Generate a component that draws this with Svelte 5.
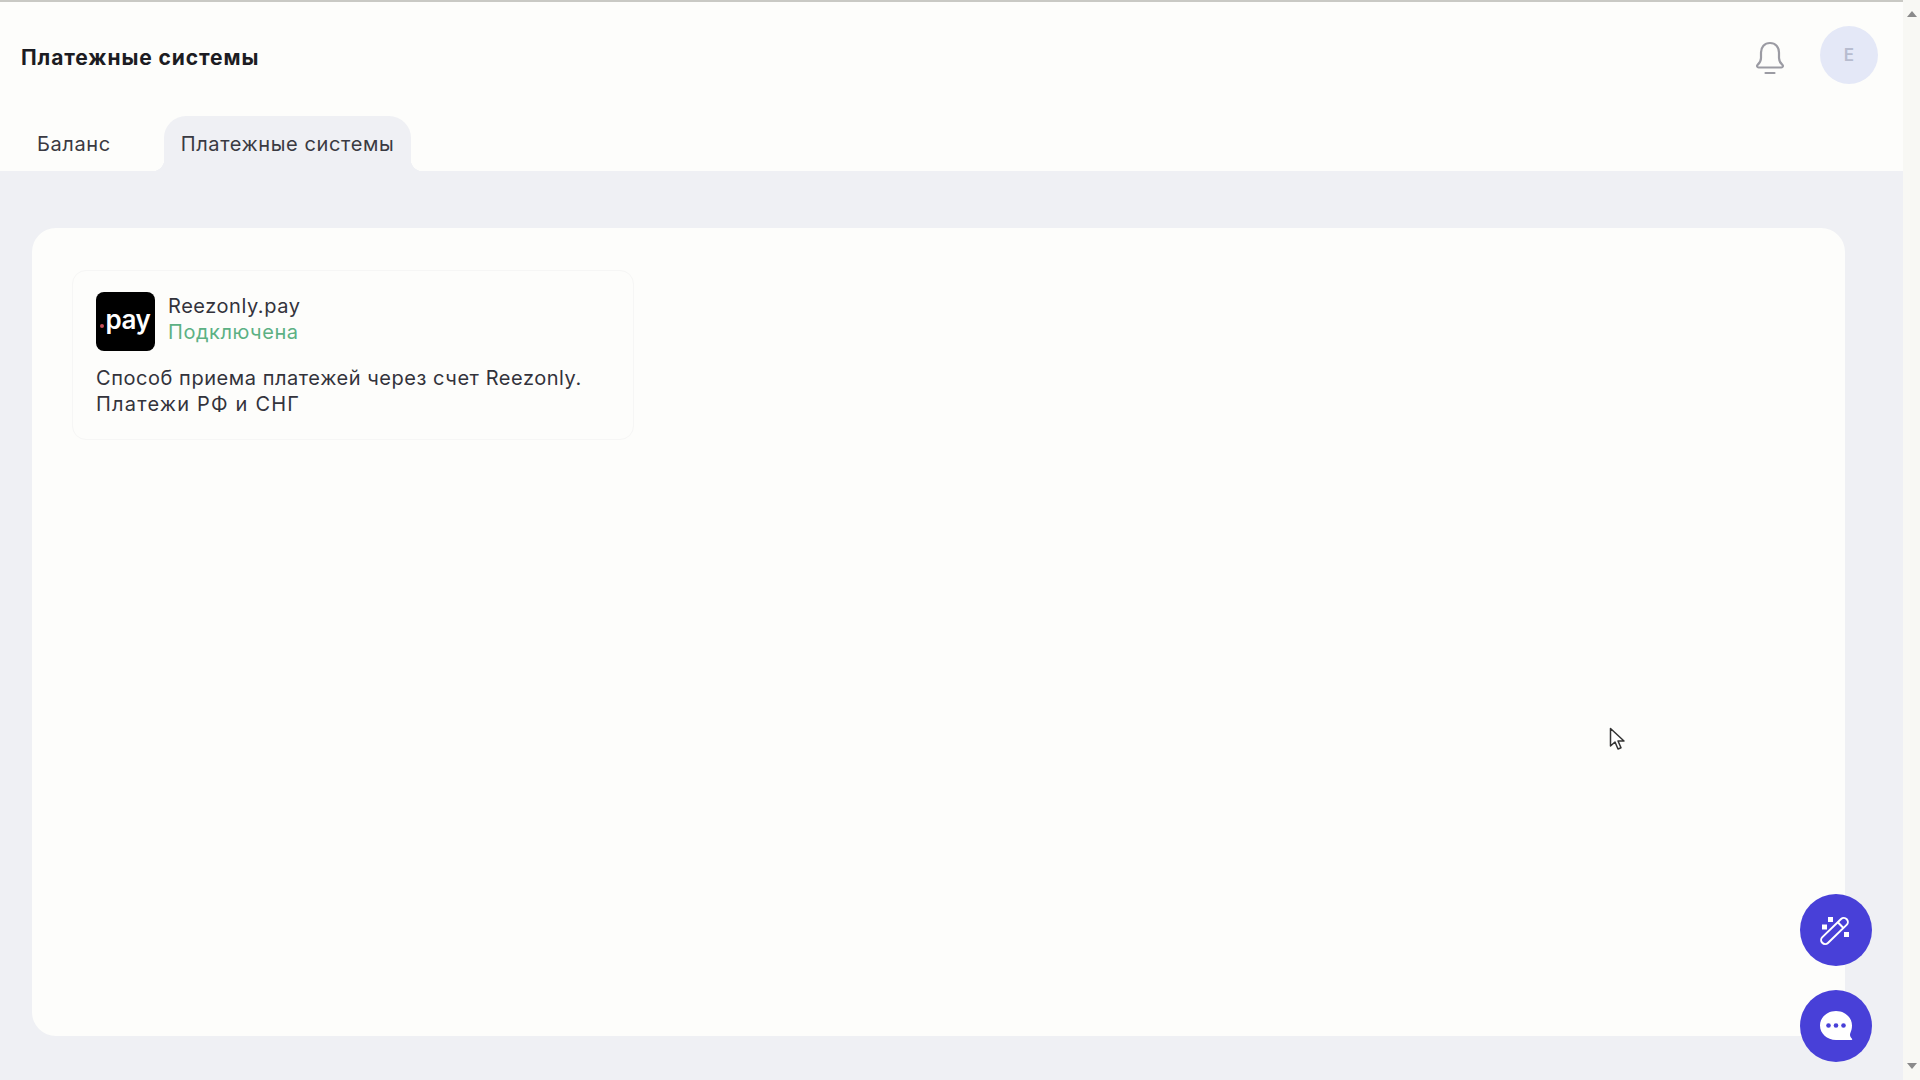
<script>
    let tabs = ["Баланс", "Платежные системы"];
    let active = $state(1);
</script>

<div class="page">
    <div class="content">
        <header class="topbar">
            <div class="title-row">
                <h1>Платежные системы</h1>
                <div class="user">
                    <svg class="bell" viewBox="0 0 30 34" width="30" height="34" fill="none" stroke="#9b9ba3" stroke-width="2.2">
                        <path d="M15 2c-5.600 0-9 4.200-9 9.500v5.500c0 3-1.300 5-3.400 6.800-1 .9-.5 2.700 1 2.700h22.800c1.500 0 2-1.800 1-2.700-2.100-1.800-3.400-3.800-3.400-6.800v-5.500c0-5.300-3.400-9.500-9-9.500z" stroke-linejoin="round" />
                        <path d="M10.500 32h9" stroke-linecap="round" />
                    </svg>
                    <div class="avatar">E</div>
                </div>
            </div>
            <nav class="tabs">
                {#each tabs as tab, i}
                    <button class="tab" class:active={active === i} onclick={() => (active = i)}>{tab}</button>
                {/each}
            </nav>
        </header>

        <main class="body">
            <section class="panel">
                <article class="system">
                    <div class="system-head">
                        <div class="logo"><i class="logo-dot"></i><span>pay</span></div>
                        <div class="system-name">
                            <div>Reezonly.pay</div>
                            <div class="status">Подключена</div>
                        </div>
                    </div>
                    <p>Способ приема платежей через счет Reezonly.<br /><span class="regions">Платежи РФ и СНГ</span></p>
                </article>
            </section>
        </main>
    </div>

    <div class="scrollbar">
        <svg viewBox="0 0 10 6" width="10" height="6"><path d="M0 6 5 0l5 6z" fill="#8a8a8a" /></svg>
        <svg viewBox="0 0 10 6" width="10" height="6"><path d="M0 0l5 6 5-6z" fill="#8a8a8a" /></svg>
    </div>

    <button class="fab wand" aria-label="Подсказки">
        <svg viewBox="0 0 32 32" width="32" height="32" fill="none" stroke="#fff" stroke-width="2">
            <g transform="translate(14.500 17) rotate(-44)">
                <rect x="-17" y="-4" width="34" height="8" rx="4" />
                <path d="M8.500-4v8" />
            </g>
            <g fill="#fff" stroke="none">
                <rect x="8" y="3" width="5" height="5" />
                <rect x="2" y="10.500" width="5" height="5" />
                <rect x="24" y="18" width="5" height="5" />
            </g>
        </svg>
    </button>
    <button class="fab chat" aria-label="Чат">
        <svg viewBox="0 0 34 32" width="34" height="32">
            <path d="M17 1C8 1 1 7.500 1 15.500S8 30 17 30h15.500c.7 0 1-.8.500-1.300-1.800-1.800-2.300-3.300-1.800-5.200C32.300 21 33 18.500 33 15.500 33 7.500 26 1 17 1z" fill="#fff" />
            <circle cx="9.500" cy="15.500" r="2.300" fill="#4840d8" />
            <circle cx="17" cy="15.500" r="2.300" fill="#4840d8" />
            <circle cx="24.500" cy="15.500" r="2.300" fill="#4840d8" />
        </svg>
    </button>

    <svg class="cursor" viewBox="0 0 16 24" width="16" height="24">
        <path d="M1.500 1.500v17.500l4.500-4 3 7 3-1.300-3-6.700h6z" fill="#fff" stroke="#333" stroke-width="1.500" stroke-linejoin="round" />
    </svg>
</div>

<style>
    :global(body) {
        background: #fdfdfb;
    }

    .page {
        display: flex;
        height: 1080px;
        overflow: hidden;
        position: relative;
        font-family: "Inter", "Noto Sans", sans-serif;
        color: #33333b;
    }

    .content {
        flex: 1;
        display: flex;
        flex-direction: column;
        min-width: 0;
    }

    .topbar {
        background: #fdfdfb;
        border-top: 2px solid #c9c9c4;
        height: 171px;
        box-sizing: border-box;
    }

    .title-row {
        display: flex;
        align-items: center;
        justify-content: space-between;
        height: 114px;
        padding: 0 8px 8px 21px;
        box-sizing: border-box;
    }

    h1 {
        margin: 5px 0 0;
        font-size: 21px;
        font-weight: 700;
        color: #1c1c22;
        letter-spacing: 0.9px;
    }

    .user {
        display: flex;
        align-items: center;
        gap: 35px;
        padding-right: 17px;
    }

    .bell {
        margin-top: 5px;
    }

    .avatar {
        width: 58px;
        height: 58px;
        border-radius: 50%;
        background: #e4e8f7;
        color: #b7bccf;
        font-size: 17px;
        font-weight: 600;
        display: flex;
        align-items: center;
        justify-content: center;
    }

    .tabs {
        display: flex;
        height: 55px;
        gap: 36px;
        padding-left: 20px;
    }

    .tab {
        position: relative;
        border: 0;
        background: none;
        padding: 0 17px;
        font: inherit;
        font-size: 20px;
        letter-spacing: 0.6px;
        color: #3a3a42;
        border-radius: 22px 22px 0 0;
    }

    .tab.active {
        background: #eff0f4;
    }

    .tab.active::before,
    .tab.active::after {
        content: "";
        position: absolute;
        bottom: 0;
        width: 12px;
        height: 12px;
    }

    .tab.active::before {
        left: -12px;
        background: radial-gradient(circle at 0 0, transparent 12px, #eff0f4 12.500px);
    }

    .tab.active::after {
        right: -12px;
        background: radial-gradient(circle at 100% 0, transparent 12px, #eff0f4 12.500px);
    }

    .body {
        flex: 1;
        background: #eff0f4;
        padding: 57px 58px 44px 32px;
        display: flex;
        min-height: 0;
    }

    .panel {
        flex: 1;
        background: #fdfdfb;
        border-radius: 24px;
        padding: 42px 40px;
    }

    .system {
        width: 562px;
        height: 170px;
        box-sizing: border-box;
        border: 1px solid #f6f6f5;
        border-radius: 14px;
        padding: 21px 23px;
        font-size: 20px;
        line-height: 26px;
        letter-spacing: 0.55px;
    }

    .system-head {
        display: flex;
        gap: 13px;
        align-items: center;
    }

    .system-name {
        margin-top: -5px;
    }

    .logo {
        position: relative;
        width: 59px;
        height: 59px;
        background: #000;
        border-radius: 8px;
        color: #fff;
        font-weight: 600;
        font-size: 26px;
        letter-spacing: -0.5px;
        line-height: 56px;
        text-align: center;
        padding-left: 5px;
        box-sizing: border-box;
    }

    .logo-dot {
        position: absolute;
        left: 4px;
        top: 32px;
        width: 4px;
        height: 4px;
        border-radius: 50%;
        background: #c4505a;
    }

    .status {
        color: #5cb184;
    }

    p {
        margin: 14px 0 0;
    }

    .regions {
        letter-spacing: 1.2px;
    }

    .scrollbar {
        width: 17px;
        background: #f8f8f4;
        display: flex;
        flex-direction: column;
        justify-content: space-between;
        align-items: center;
        padding: 11px 0;
        box-sizing: border-box;
    }

    .fab {
        position: absolute;
        left: 1799.5px;
        width: 72px;
        height: 72px;
        border: 0;
        padding: 0;
        border-radius: 50%;
        background: #4840d8;
        display: flex;
        align-items: center;
        justify-content: center;
    }

    .wand {
        top: 894px;
    }

    .chat {
        top: 990px;
    }

    .cursor {
        position: absolute;
        left: 1609px;
        top: 727px;
    }
</style>
